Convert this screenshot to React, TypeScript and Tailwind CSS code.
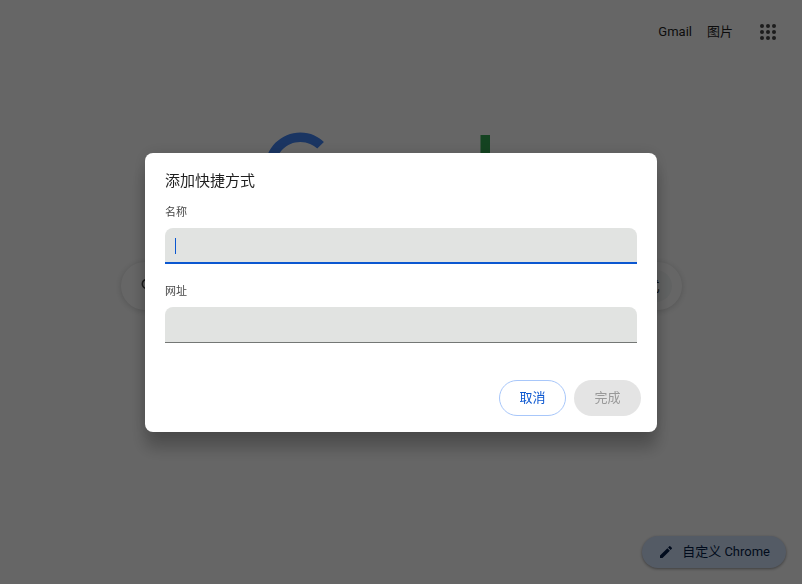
import { useState } from 'react';

function AppsIcon() {
  return (
    <svg viewBox="0 0 24 24" className="size-6 fill-[#474747]" aria-hidden="true">
      {[6, 12, 18].map((y) => [6, 12, 18].map((x) => <circle key={`${x}-${y}`} cx={x} cy={y} r="2" />))}
    </svg>
  );
}

function Logo() {
  return (
    <svg viewBox="0 0 272 92" className="h-[92px] w-[272px]" role="img" aria-label="Google">
      <path
        fill="#4285F4"
        d="M35.29 41.41V32H67c.31 1.64.47 3.58.47 5.68 0 7.06-1.93 15.79-8.15 22.01-6.05 6.3-13.78 9.66-24.02 9.66C16.32 69.35.36 53.89.36 34.91.36 15.93 16.32.47 35.3.47c10.5 0 17.98 4.12 23.6 9.49l-6.64 6.64c-4.03-3.78-9.49-6.72-16.97-6.72-13.86 0-24.7 11.17-24.7 25.03 0 13.86 10.84 25.03 24.7 25.03 8.99 0 14.11-3.61 17.39-6.89 2.66-2.66 4.41-6.46 5.1-11.65l-22.49.01z"
      />
      <circle cx="93.5" cy="47" r="17.5" fill="none" stroke="#EA4335" strokeWidth="9.5" />
      <circle cx="141.5" cy="47" r="17.5" fill="none" stroke="#FBBC05" strokeWidth="9.5" />
      <circle cx="188" cy="47" r="17" fill="none" stroke="#4285F4" strokeWidth="9.5" />
      <path fill="#34A853" d="M225 3v65h-9.5V3h9.5z" />
    </svg>
  );
}

function Field({
  id,
  label,
  value,
  active,
  onChange,
}: {
  id: string;
  label: string;
  value: string;
  active: boolean;
  onChange: (value: string) => void;
}) {
  return (
    <div>
      <label htmlFor={id} className="mb-[7px] block text-[11px] leading-4 text-[#474747]">
        {label}
      </label>
      <div className="relative">
        <input
          id={id}
          type="text"
          value={value}
          onChange={(e) => onChange(e.target.value)}
          className={`block h-9 w-full rounded-t-lg bg-[#e1e3e1] px-[10px] text-[13px] text-[#1f1f1f] caret-transparent outline-none ${
            active ? 'border-b-2 border-[#0b57d0]' : 'border-b border-[#747775]'
          }`}
        />
        {active && value === '' && <span className="absolute top-[10px] left-[10px] h-4 w-px bg-[#0b57d0]" />}
      </div>
    </div>
  );
}

export default function App() {
  const [name, setName] = useState('');
  const [url, setUrl] = useState('');

  return (
    <div className="relative flex min-h-screen flex-col bg-white font-['Roboto','Noto_Sans_CJK_SC',sans-serif] text-[13px] text-[#1f1f1f]">
      <header className="flex h-16 items-center justify-end pr-[22px]">
        <a href="#gmail" className="mr-[15px]">
          Gmail
        </a>
        <a href="#images" className="mr-[23px]">
          图片
        </a>
        <button type="button" aria-label="Google 应用">
          <AppsIcon />
        </button>
      </header>

      <main className="flex flex-col items-center px-5 pt-[68px]">
        <Logo />
        <form className="mt-[38px] flex h-12 w-full max-w-[561px] items-center rounded-full bg-white pr-[10px] pl-[18px] shadow-[0_1px_6px_rgba(32,33,36,0.2)]">
          <svg viewBox="0 0 24 24" className="size-5 fill-[#474747]" aria-hidden="true">
            <path d="M15.5 14h-.79l-.28-.27A6.47 6.47 0 0 0 16 9.5 6.5 6.5 0 1 0 9.5 16c1.61 0 3.09-.59 4.23-1.57l.27.28v.79l5 4.99L20.49 19l-4.99-5zm-6 0C7.01 14 5 11.99 5 9.5S7.01 5 9.5 5 14 7.01 14 9.5 11.99 14 9.5 14z" />
          </svg>
          <input type="text" aria-label="搜索" className="min-w-0 flex-1 px-3 outline-none" />
          <button type="button" className="h-8 rounded-full bg-[#f3f6f6] px-3 text-sm">
            AI 模式
          </button>
        </form>
      </main>

      <button
        type="button"
        className="mt-auto mr-4 mb-4 flex h-8 items-center gap-2 self-end rounded-full bg-[#d3e3fd] px-4 text-[13px] text-[#041e49] shadow-[0_1px_3px_rgba(0,0,0,0.4)]"
      >
        <svg viewBox="0 0 24 24" className="size-4 fill-current" aria-hidden="true">
          <path d="M3 17.25V21h3.75L17.81 9.94l-3.75-3.75L3 17.25zM20.71 7.04a1 1 0 0 0 0-1.41l-2.34-2.34a1 1 0 0 0-1.41 0l-1.83 1.83 3.75 3.75 1.83-1.83z" />
        </svg>
        自定义 Chrome
      </button>

      <div className="fixed inset-0 flex items-center justify-center bg-black/60 pt-px">
        <div
          role="dialog"
          aria-modal="true"
          aria-labelledby="dialog-title"
          className="w-full max-w-lg rounded-lg bg-white pb-4 shadow-[0_0_16px_rgba(0,0,0,0.12),0_16px_16px_rgba(0,0,0,0.24)]"
        >
          <h2 id="dialog-title" className="px-5 pt-4 pb-3 text-[15px] leading-6">
            添加快捷方式
          </h2>
          <div className="flex flex-col gap-5 px-5">
            <Field id="shortcut-name" label="名称" value={name} active onChange={setName} />
            <Field id="shortcut-url" label="网址" value={url} active={false} onChange={setUrl} />
          </div>
          <div className="mt-[37px] flex justify-end gap-2 px-4">
            <button type="button" className="h-9 w-[67px] rounded-full border border-[#a8c7fa] text-[#0b57d0]">
              取消
            </button>
            <button type="button" disabled className="h-9 w-[67px] rounded-full bg-[#e4e4e4] text-[#999]">
              完成
            </button>
          </div>
        </div>
      </div>
    </div>
  );
}
